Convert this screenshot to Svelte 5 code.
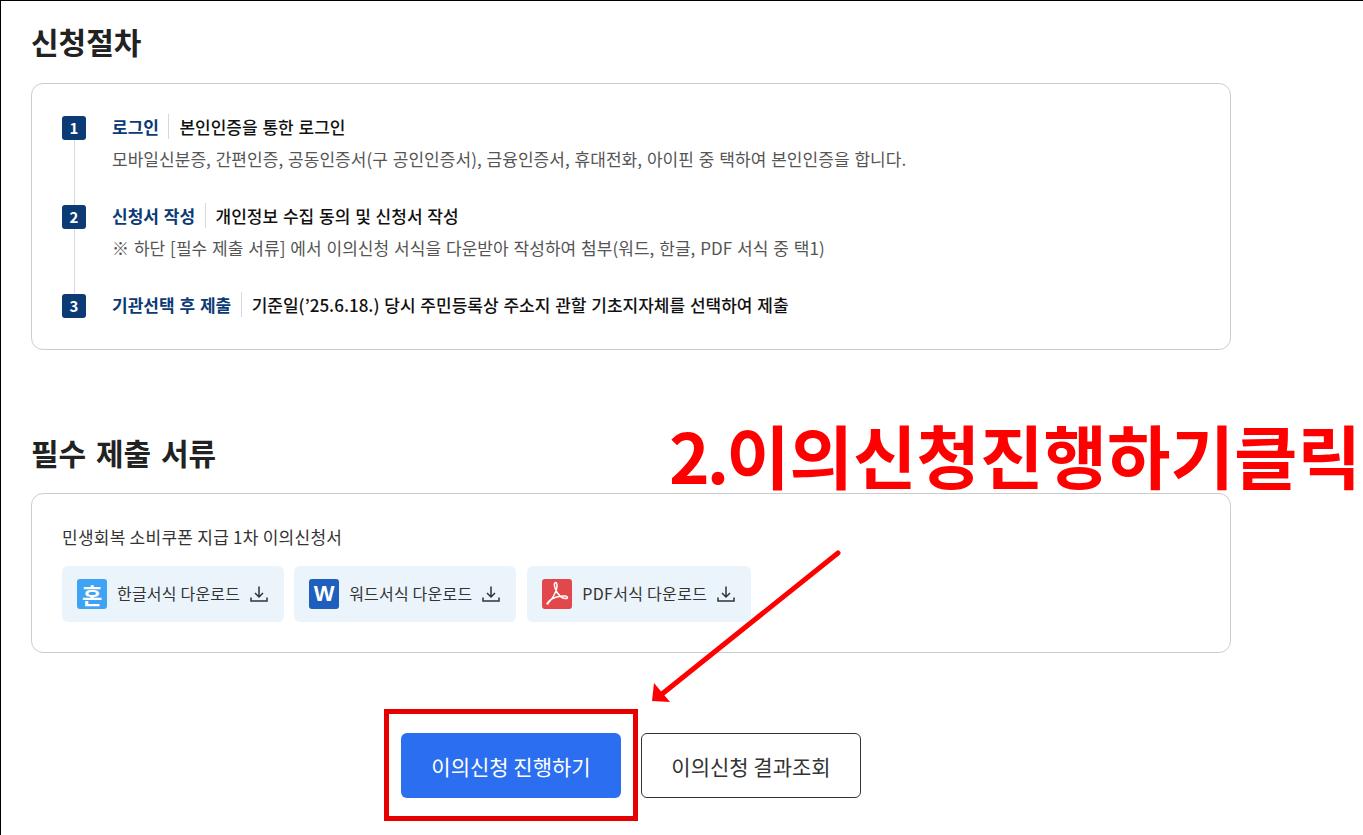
<script>
	const steps = [
		{ no: 1, title: "로그인", lead: "본인인증을 통한 로그인", desc: "모바일신분증, 간편인증, 공동인증서(구 공인인증서), 금융인증서, 휴대전화, 아이핀 중 택하여 본인인증을 합니다." },
		{ no: 2, title: "신청서 작성", lead: "개인정보 수집 동의 및 신청서 작성", desc: "※ 하단 [필수 제출 서류] 에서 이의신청 서식을 다운받아 작성하여 첨부(워드, 한글, PDF 서식 중 택1)" },
		{ no: 3, title: "기관선택 후 제출", lead: "기준일(’25.6.18.) 당시 주민등록상 주소지 관할 기초지자체를 선택하여 제출", desc: "" }
	];
	const files = [
		{ kind: "hwp", label: "한글서식 다운로드" },
		{ kind: "word", label: "워드서식 다운로드" },
		{ kind: "pdf", label: "PDF서식 다운로드" }
	];
</script>

<div class="page">
	<h2 class="first">신청절차</h2>
	<section class="card steps">
		{#each steps as step}
			<div class="step">
				<span class="num">{step.no}</span>
				<div class="body">
					<p class="head"><strong>{step.title}</strong><span class="lead">{step.lead}</span></p>
					{#if step.desc}
						<p class="desc">{step.desc}</p>
					{/if}
				</div>
			</div>
		{/each}
	</section>

	<h2 class="second">필수 제출 서류</h2>
	<section class="card docs">
		<p class="doc-title">민생회복 소비쿠폰 지급 1차 이의신청서</p>
		<div class="files">
			{#each files as file}
				<button class="file {file.kind}-file">
					<span class="badge {file.kind}">
						{#if file.kind === "hwp"}
							<span class="hwp-glyph">혼</span>
						{:else if file.kind === "word"}
							<span class="word-glyph">W</span>
						{:else}
							<svg viewBox="0 0 30 30" width="30" height="30" fill="none" stroke="#fff" stroke-width="1.5" stroke-linejoin="round">
								<path d="M5 24.500c2-1 4.500-4 6.500-7.500 2-3.500 3.500-7 3.500-10 0-2-.5-3.500-1.500-3.500s-1.300 1.500-1 3.500c.6 4 4 9.500 7.500 11.500 2 1.200 5.500 1.500 5.500 0s-3.500-1.800-7-1.300c-5 .7-10 3-12 5.500-1 1.300-1.300 2.300-.5 2.300z" />
							</svg>
						{/if}
					</span>
					<span class="label">{file.label}</span>
					<svg class="dl" viewBox="0 0 18 18" width="18" height="18" fill="none" stroke="#333" stroke-width="1.5">
						<path d="M9 1.500v10M5 8l4 4 4-4M1 12.500v3.500h16v-3.500" />
					</svg>
				</button>
			{/each}
		</div>
	</section>

	<div class="actions">
		<button class="btn primary">이의신청 진행하기</button>
		<button class="btn outline">이의신청 결과조회</button>
	</div>

	<!-- annotation drawn over the capture -->
	<div class="note"><span class="note-no">2.</span>이의신청진행하기클릭</div>
	<div class="mark"></div>
	<svg class="arrow" viewBox="0 0 1363 835" width="1363" height="835" fill="none">
		<path d="M838 553 L662 694" stroke="#f00" stroke-width="5" stroke-linecap="round" />
		<path d="M652 701 L654 683 L670 702 Z" fill="#f00" />
	</svg>
</div>

<style>
	:global(body) {
		margin: 0;
		background: #fff;
	}

	.page {
		position: relative;
		box-sizing: border-box;
		height: 835px;
		overflow: hidden;
		padding-left: 30px;
		border-top: 1px solid #000;
		border-left: 1px solid #000;
		font-family: "Noto Sans CJK KR", "Noto Sans", sans-serif;
		color: #222;
	}

	h2 {
		margin: 0;
		font-size: 30px;
		line-height: 40px;
		font-weight: 700;
		color: #222;
		word-spacing: 3px;
	}

	.first {
		margin-top: 20px;
	}

	.second {
		margin-top: 82px;
	}

	.card {
		box-sizing: border-box;
		width: 1200px;
		border: 1px solid #ccc;
		border-radius: 12px;
	}

	.steps {
		height: 267px;
		margin-top: 22px;
		padding: 32px 30px 0;
		display: flex;
		flex-direction: column;
	}

	.step {
		flex: none;
		display: flex;
		gap: 26px;
		height: 89px;
		position: relative;
	}

	.step:not(:last-child)::before {
		content: "";
		position: absolute;
		left: 12px;
		top: 24px;
		width: 1px;
		height: 65px;
		background: #d4dce6;
	}

	.num {
		flex: none;
		width: 24px;
		height: 24px;
		border-radius: 3px;
		background: #0b3a75;
		color: #fff;
		font-size: 15px;
		font-weight: 700;
		line-height: 24px;
		text-align: center;
	}

	.body {
		margin-top: -1px;
	}

	.body p {
		margin: 0;
	}

	.head {
		font-size: 17px;
		line-height: 24px;
		color: #111;
		white-space: nowrap;
		word-spacing: 1px;
	}

	.head strong {
		color: #0b3a75;
		font-weight: 700;
	}

	.lead {
		margin-left: 9.500px;
		padding-left: 10px;
		border-left: 1px solid #d8d8d8;
		font-weight: 500;
	}

	.body .desc {
		margin-top: 8px;
		font-size: 17px;
		line-height: 24px;
		color: #555;
		white-space: nowrap;
		word-spacing: 1px;
		letter-spacing: 0.04px;
	}

	.docs {
		height: 160px;
		margin-top: 21px;
		padding: 32px 30px 0;
	}

	.doc-title {
		margin: 0;
		font-size: 17px;
		line-height: 24px;
		color: #333;
		letter-spacing: 0.25px;
		position: relative;
		top: -1px;
	}

	.files {
		display: flex;
		gap: 10px;
		margin-top: 16px;
	}

	.file {
		display: flex;
		align-items: center;
		height: 56px;
		padding: 0 16px 0 15px;
		border: 0;
		border-radius: 6px;
		background: #ebf3fb;
		font: inherit;
		font-size: 16px;
		color: #333;
	}

	.pdf-file {
		margin-left: 1px;
	}

	.badge {
		display: flex;
		align-items: center;
		justify-content: center;
		width: 30px;
		height: 30px;
		border-radius: 3px;
		color: #fff;
	}

	.hwp {
		background: #3ea3f5;
	}

	.word {
		background: #1e5fbd;
	}

	.pdf {
		background: #e2474c;
	}

	.hwp-glyph {
		font-size: 22px;
		font-weight: 700;
	}

	.word-glyph {
		font-family: "Liberation Sans", sans-serif;
		font-size: 22px;
		font-weight: 700;
	}

	.label {
		margin-left: 10px;
		white-space: nowrap;
		letter-spacing: 0.2px;
		position: relative;
		top: -1px;
	}

	.pdf-file .label {
		letter-spacing: 0.3px;
	}

	.dl {
		margin-left: 10px;
	}

	.actions {
		display: flex;
		gap: 20px;
		margin: 80px 0 0 370px;
	}

	.btn {
		box-sizing: border-box;
		width: 220px;
		height: 65px;
		border-radius: 6px;
		font: inherit;
		font-size: 21px;
	}

	.primary {
		border: 0;
		background: #2b6ff0;
		color: #fff;
	}

	.outline {
		border: 1px solid #333;
		background: #fff;
		color: #333;
	}

	.note {
		position: absolute;
		left: 668px;
		top: 403px;
		font-size: 69px;
		line-height: 100px;
		font-weight: 700;
		color: #f00;
		white-space: nowrap;
	}

	.note-no {
		letter-spacing: -3px;
	}

	.mark {
		position: absolute;
		left: 383px;
		top: 708px;
		box-sizing: border-box;
		width: 254px;
		height: 112px;
		border: 5px solid #e80000;
	}

	.arrow {
		position: absolute;
		left: -1px;
		top: -1px;
		pointer-events: none;
	}
</style>
